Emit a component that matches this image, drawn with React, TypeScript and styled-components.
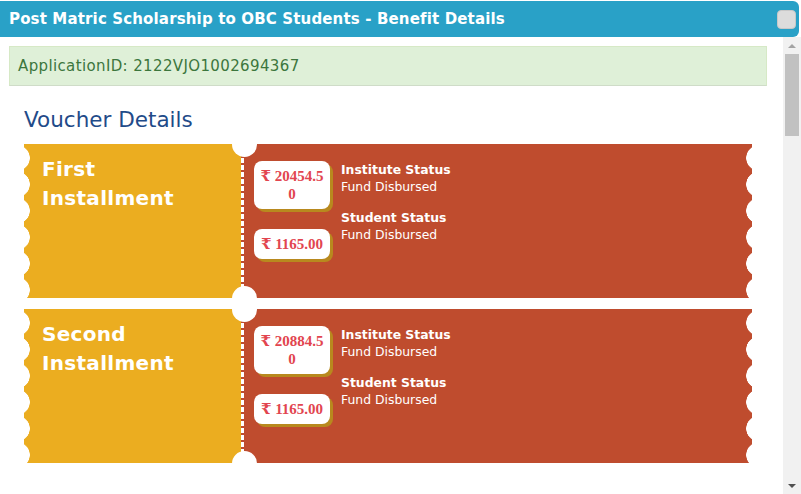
import styled, { createGlobalStyle } from "styled-components";

const GlobalStyle = createGlobalStyle`
  html, body {
    margin: 0;
    padding: 0;
    background: #fff;
  }
  body {
    font-family: "DejaVu Sans", Verdana, sans-serif;
  }
`;

const YELLOW = "#ebad20";
const RED = "#bf4c2e";

const Dialog = styled.div`
  width: 801px;
  height: 494px;
  display: flex;
  flex-direction: column;
  overflow: hidden;
  background: #fff;
`;

const TitleBar = styled.div`
  height: 36px;
  margin: 1px 2px 0 0;
  padding: 0 4px 0 9px;
  display: flex;
  align-items: center;
  justify-content: space-between;
  background: #29a1c7;
  border-radius: 0 6px 6px 0;
  h1 {
    margin: 0;
    color: #fff;
    font-size: 15px;
    letter-spacing: 0.15px;
    font-weight: bold;
  }
`;

const CloseButton = styled.button`
  width: 19px;
  height: 19px;
  padding: 0;
  border: 1px solid #c8c8c8;
  border-radius: 4px;
  background: #dcdcdc;
  margin-right: -1px;
`;

const Main = styled.div`
  flex: 1;
  min-height: 0;
  display: flex;
`;

const Content = styled.div`
  flex: 1;
  overflow: hidden;
  padding: 9px 16px 0 9px;
`;

const ScrollTrack = styled.div`
  width: 18px;
  display: flex;
  flex-direction: column;
  align-items: center;
  background: #f1f1f1;
`;

const Arrow = styled.div<{ $down?: boolean }>`
  height: 17px;
  width: 100%;
  display: flex;
  align-items: center;
  justify-content: center;
  &::before {
    content: "";
    border-left: 4px solid transparent;
    border-right: 4px solid transparent;
    ${(p) => (p.$down ? "border-top: 4px solid #505050;" : "border-bottom: 4px solid #a3a3a3;")}
  }
`;

const Thumb = styled.div`
  width: 14px;
  height: 82px;
  background: #c1c1c1;
`;

const Spacer = styled.div`
  flex: 1;
`;

const Alert = styled.div`
  height: 40px;
  box-sizing: border-box;
  padding: 0 8px;
  display: flex;
  align-items: center;
  background: #dff0d8;
  border: 1px solid #d6e9c6;
  border-bottom-color: #cfdcc8;
  color: #3c763d;
  font-size: 15px;
  letter-spacing: 0.37px;
`;

const Section = styled.div`
  padding: 0 15px;
  h2 {
    margin: 21px 0 11px;
    font-size: 21.5px;
    line-height: 26px;
    font-weight: normal;
    color: #1f4b89;
  }
`;

const TicketList = styled.div`
  display: flex;
  flex-direction: column;
  gap: 11px;
`;

const Ticket = styled.div`
  height: 154px;
  display: flex;
`;

const Stub = styled.div`
  width: 217px;
  box-sizing: border-box;
  padding: 11px 18px;
  background:
    radial-gradient(circle at -7px 50%, #fff 12.5px, transparent 13px) 0 0.8px / 20px 26.4px repeat-y,
    ${YELLOW};
  color: #fff;
  font-size: 20px;
  letter-spacing: 0.3px;
  line-height: 29px;
  font-weight: bold;
`;

const Divider = styled.div`
  width: 3px;
  position: relative;
  background: repeating-linear-gradient(to bottom, #fff 0 5px, ${RED} 5px 7px);
  &::before,
  &::after {
    content: "";
    position: absolute;
    left: 50%;
    width: 25px;
    height: 25px;
    margin-left: -11px;
    border-radius: 50%;
    background: #fff;
  }
  &::before {
    top: -12.5px;
  }
  &::after {
    bottom: -12.5px;
  }
`;

const Body = styled.div`
  flex: 1;
  display: flex;
  align-items: flex-start;
  gap: 11px;
  padding: 17px 10px;
  background:
    radial-gradient(circle at calc(100% + 7px) 50%, #fff 12.5px, transparent 13px) right 0 top 0.8px / 20px 26.4px repeat-y,
    ${RED};
`;

const Amounts = styled.div`
  display: flex;
  flex-direction: column;
  gap: 20px;
`;

const Amount = styled.div`
  width: 76px;
  box-sizing: border-box;
  padding: 6px 5px;
  background: #fff;
  border-radius: 8px;
  box-shadow: 3px 3px 0 #b8891e;
  color: #e2454f;
  font-family: "Liberation Serif", "DejaVu Serif", serif;
  font-weight: bold;
  font-size: 15px;
  line-height: 18px;
  text-align: center;
  word-break: break-all;
`;

const StatusList = styled.div`
  display: flex;
  flex-direction: column;
  gap: 14px;
  color: #fff;
  font-size: 12.4px;
  line-height: 17px;
  b {
    display: block;
  }
`;

type Installment = { name: string[]; amounts: string[] };

const installments: Installment[] = [
  { name: ["First", "Installment"], amounts: ["20454.50", "1165.00"] },
  { name: ["Second", "Installment"], amounts: ["20884.50", "1165.00"] },
];

const App = () => (
  <Dialog>
    <GlobalStyle />
    <TitleBar>
      <h1>Post Matric Scholarship to OBC Students - Benefit Details</h1>
      <CloseButton aria-label="close" />
    </TitleBar>
    <Main>
      <Content>
        <Alert>ApplicationID: 2122VJO1002694367</Alert>
        <Section>
          <h2>Voucher Details</h2>
          <TicketList>
            {installments.map((inst) => (
              <Ticket key={inst.name[0]}>
                <Stub>
                  {inst.name[0]}
                  <br />
                  {inst.name[1]}
                </Stub>
                <Divider />
                <Body>
                  <Amounts>
                    {inst.amounts.map((a, i) => (
                      <Amount key={i}>₹ {a}</Amount>
                    ))}
                  </Amounts>
                  <StatusList>
                    <div>
                      <b>Institute Status</b>
                      Fund Disbursed
                    </div>
                    <div>
                      <b>Student Status</b>
                      Fund Disbursed
                    </div>
                  </StatusList>
                </Body>
              </Ticket>
            ))}
          </TicketList>
        </Section>
      </Content>
      <ScrollTrack>
        <Arrow />
        <Thumb />
        <Spacer />
        <Arrow $down />
      </ScrollTrack>
    </Main>
  </Dialog>
);

export default App;
